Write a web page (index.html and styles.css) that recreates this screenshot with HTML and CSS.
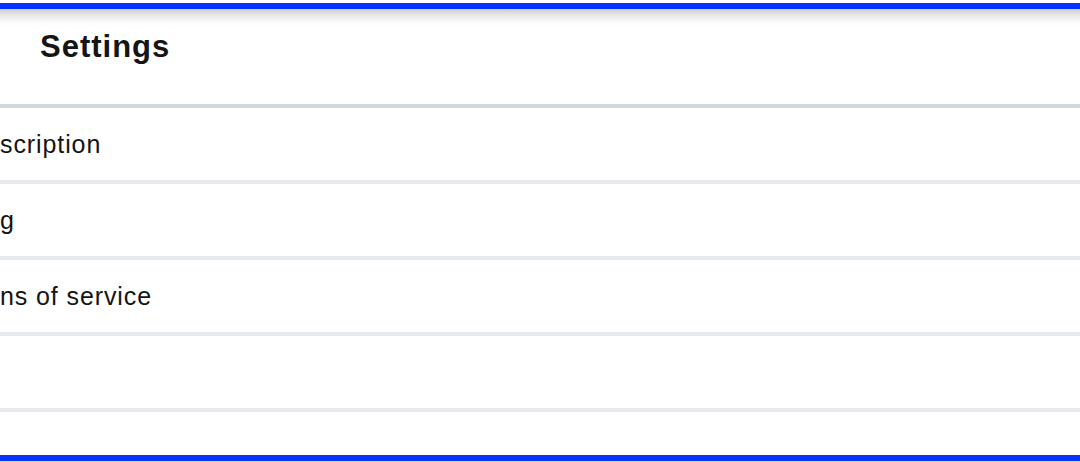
FILE: index.html
```html
<!DOCTYPE html>
<html lang="en">
<head>
<meta charset="utf-8">
<title>Settings</title>
<link rel="stylesheet" href="styles.css">
</head>
<body>
<div class="frame">
  <header class="header">
    <h1 class="title">Settings</h1>
  </header>
  <ul class="list">
    <li class="row">scription</li>
    <li class="row">g</li>
    <li class="row">ns of service</li>
    <li class="row"></li>
    <li class="row row-last"></li>
  </ul>
</div>
</body>
</html>
```
FILE: styles.css
```css
html, body {
  margin: 0;
  padding: 0;
  background: #ffffff;
}
body {
  width: 1080px;
  height: 462px;
  overflow: hidden;
  font-family: "Liberation Sans", Arial, sans-serif;
  color: #141414;
}
.frame {
  margin-top: 3px;
  border-top: 6px solid #0433ff;
  border-bottom: 6px solid #0433ff;
  box-shadow: 0 1px 0 #c9d3ff;
  height: 446px;
  display: flex;
  flex-direction: column;
  overflow: hidden;
}
.header {
  height: 99px;
  flex: none;
  box-sizing: border-box;
  padding: 20px 0 0 40px;
  background: linear-gradient(#cdcdcd 0px, #e6e6e6 6px, #fafafa 13px, #ffffff 17px);
  border-bottom: 4px solid #d1d8de;
}
.title {
  margin: 0;
  font-size: 31px;
  line-height: 36px;
  font-weight: 700;
  letter-spacing: 1px;
  color: #151515;
}
.list {
  list-style: none;
  margin: 0;
  padding: 0;
  flex: 1;
  display: flex;
  flex-direction: column;
}
.row {
  height: 72px;
  flex: none;
  display: flex;
  align-items: center;
  font-size: 25px;
  letter-spacing: 0.9px;
  border-bottom: 4px solid #e6eaee;
  white-space: nowrap;
}
.row-last {
  flex: 1;
  border-bottom: none;
}
```
